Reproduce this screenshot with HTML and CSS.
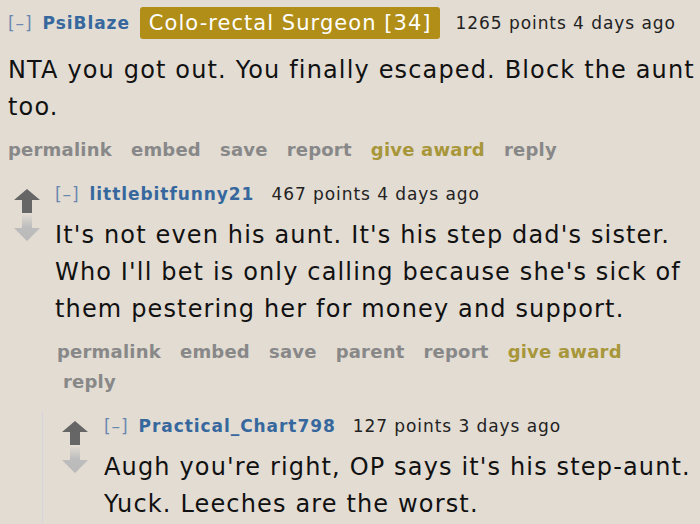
FILE: index.html
```html
<!DOCTYPE html>
<html>
<head>
<meta charset="utf-8">
<link rel="stylesheet" href="styles.css">
</head>
<body>
<div class="comment top">
  <div class="entry">
    <p class="tagline"><span class="expand">[–]</span> <span class="author">PsiBlaze</span> <span class="flair">Colo-rectal Surgeon [34]</span> <span class="score">1265 points 4 days ago</span></p>
    <div class="body">NTA you got out. You finally escaped. Block the aunt too.</div>
    <ul class="buttons"><li>permalink</li><li>embed</li><li>save</li><li>report</li><li class="award">give award</li><li>reply</li></ul>
  </div>
  <div class="child lvl1">
    <div class="comment">
      <div class="midcol">
        <svg class="arrows" width="28" height="54" viewBox="0 0 28 54">
          <defs><linearGradient id="dg" x1="0" y1="0" x2="0" y2="1"><stop offset="0" stop-color="#c6c3bf" stop-opacity="0.2"/><stop offset="0.45" stop-color="#bdbdbd"/><stop offset="1" stop-color="#b9b9b9"/></linearGradient></defs>
          <polygon points="14,0 27,11 19,11 19,24 9,24 9,11 1,11" fill="#666"/>
          <polygon points="9,26 19,26 19,39 27,39 14,52 1,39 9,39" fill="url(#dg)"/>
        </svg>
      </div>
      <div class="entry">
        <p class="tagline"><span class="expand">[–]</span> <span class="author">littlebitfunny21</span> <span class="score">467 points 4 days ago</span></p>
        <div class="body">It's not even his aunt. It's his step dad's sister. Who I'll bet is only calling because she's sick of them pestering her for money and support.</div>
        <ul class="buttons"><li>permalink</li><li>embed</li><li>save</li><li>parent</li><li>report</li><li class="award">give award</li><li>reply</li></ul>
      </div>
    </div>
    <div class="child lvl2">
      <div class="comment">
        <div class="midcol">
          <svg class="arrows" width="28" height="54" viewBox="0 0 28 54">
            <defs><linearGradient id="dg2" x1="0" y1="0" x2="0" y2="1"><stop offset="0" stop-color="#c6c3bf" stop-opacity="0.2"/><stop offset="0.45" stop-color="#bdbdbd"/><stop offset="1" stop-color="#b9b9b9"/></linearGradient></defs>
            <polygon points="14,0 27,11 19,11 19,24 9,24 9,11 1,11" fill="#666"/>
            <polygon points="9,26 19,26 19,39 27,39 14,52 1,39 9,39" fill="url(#dg2)"/>
          </svg>
        </div>
        <div class="entry">
          <p class="tagline"><span class="expand">[–]</span> <span class="author">Practical_Chart798</span> <span class="score">127 points 3 days ago</span></p>
          <div class="body">Augh you're right, OP says it's his step-aunt. Yuck. Leeches are the worst.</div>
        </div>
      </div>
    </div>
  </div>
</div>
</body>
</html>
```

FILE: styles.css
```css
html, body {
  margin: 0;
  padding: 0;
  background: #e2dcd3;
}
body {
  font-family: "DejaVu Sans", Verdana, sans-serif;
  color: #111;
  overflow: hidden;
  height: 524px;
}
.comment.top {
  padding: 7px 0 0 8px;
}
.tagline {
  margin: 0;
  font-size: 17px;
  letter-spacing: 0.055em;
  line-height: 32px;
  color: #222;
  display: flex;
  align-items: center;
  white-space: nowrap;
}
.expand {
  color: #6a87b0;
  margin-right: 10px;
}
.author {
  color: #36689e;
  font-weight: bold;
  margin-right: 10px;
}
.score {
  margin-left: 7px;
}
.flair {
  background: #b08e18;
  color: #fff;
  font-size: 21px;
  letter-spacing: 0.05em;
  line-height: 32px;
  padding: 0 8px 0 9px;
  border-radius: 3px;
  margin-right: 9px;
}
.body {
  font-size: 24px;
  letter-spacing: 0.048em;
  line-height: 37px;
  margin-top: 13px;
  padding-right: 4px;
}
.buttons {
  list-style: none;
  margin: 9px 0 0 0;
  padding: 0;
  display: flex;
  flex-wrap: wrap;
  font-size: 18px;
  font-weight: bold;
  letter-spacing: 0.012em;
  color: #888;
  line-height: 30px;
}
.buttons li {
  padding: 0 9.5px;
}
.buttons li:first-child {
  padding-left: 0;
}
.buttons li.award {
  color: #a8973a;
}
.lvl1 {
  margin: 14px 0 0 5px;
}
.child .comment {
  display: flex;
}
.midcol {
  width: 28px;
  flex: none;
  padding-top: 10px;
}
.arrows {
  display: block;
}
.lvl1 > .comment > .entry {
  padding-left: 14px;
}
.lvl1 .tagline {
  line-height: 30px;
}
.lvl1 .body {
  margin-top: 8px;
  line-height: 37px;
}
.lvl1 .buttons {
  margin-top: 9px;
}
.lvl1 .buttons li:first-child {
  padding-left: 2px;
}
.lvl1 .buttons li:last-child {
  padding-left: 8px;
}
.lvl2 {
  margin: 14px 0 0 29px;
  border-left: 1px solid #d5d5e0;
  padding-left: 18px;
}
.lvl2 > .comment > .entry {
  padding-left: 15px;
}
```
